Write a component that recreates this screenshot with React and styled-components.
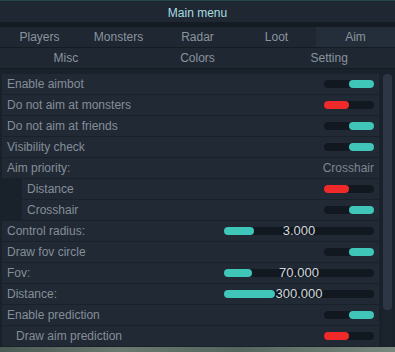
import React from 'react'
import styled, { createGlobalStyle } from 'styled-components'

const Global = createGlobalStyle`
  html, body {
    margin: 0;
    padding: 0;
    background: #182028;
  }
  body {
    font-family: "Liberation Sans", Arial, sans-serif;
    font-size: 12px;
  }
`

const Window = styled.div`
  width: 395px;
  height: 352px;
  background: #19212a;
  display: flex;
  flex-direction: column;
  overflow: hidden;
  position: relative;
`
const TitleBar = styled.div`
  height: 22px;
  background: #1f2732;
  border-top: 1px solid #24474c;
  box-sizing: border-box;
  padding-top: 2px;
  display: flex;
  align-items: center;
  justify-content: center;
  color: #a9dde2;
  font-size: 12px;
`
const Divider = styled.div`
  height: 5px;
  background: #141b22;
`
const TabRow = styled.div`
  display: grid;
  grid-template-columns: repeat(${(p) => p.$cols}, 1fr);
  height: 20px;
  background: #1f2732;
  border-bottom: 1px solid #141b22;
`
const Tab = styled.div`
  display: flex;
  align-items: center;
  justify-content: center;
  color: #8a949f;
  background: ${(p) => (p.$active ? '#242e3b' : 'transparent')};
`
const Body = styled.div`
  flex: 1;
  display: flex;
  padding: 5px 3px 0 2px;
  gap: 4px;
`
const List = styled.div`
  flex: 1;
  display: flex;
  flex-direction: column;
  gap: 1px;
`
const Row = styled.div`
  height: 20px;
  margin-left: ${(p) => (p.$nested ? '20px' : '0')};
  padding-left: ${(p) => (p.$indent ? '14px' : '5px')};
  padding-right: 5px;
  background: #212934;
  display: flex;
  align-items: center;
  justify-content: space-between;
  color: #848e99;
  flex-shrink: 0;
`
const Value = styled.span`
  color: #7c8690;
`
const Toggle = styled.div`
  width: 50px;
  height: 8px;
  border-radius: 4px;
  background: #111820;
  display: flex;
  justify-content: ${(p) => (p.$on ? 'flex-end' : 'flex-start')};
`
const Knob = styled.div`
  width: 25px;
  height: 100%;
  border-radius: 4px;
  background: ${(p) => (p.$on ? '#40c5b9' : '#f0292b')};
`
const Slider = styled.div`
  width: 150px;
  height: 8px;
  border-radius: 4px;
  background: #111820;
  position: relative;
  display: flex;
  align-items: center;
  justify-content: center;
`
const Fill = styled.div`
  position: absolute;
  left: 0;
  top: 0;
  height: 100%;
  border-radius: 4px;
  background: #40c5b9;
`
const SliderText = styled.span`
  position: relative;
  color: #d3d7dc;
  font-size: 13px;
  line-height: 8px;
`
const Scrollbar = styled.div`
  width: 9px;
  height: 274px;
  background: #1b232c;
  border-radius: 4px 4px 0 0;
  display: flex;
  flex-direction: column;
`
const Thumb = styled.div`
  height: 236px;
  background: #2d3644;
  border-radius: 4px;
`
const Ground = styled.div`
  position: absolute;
  left: 0;
  right: 0;
  bottom: 0;
  height: 5px;
  background: linear-gradient(90deg, #4a5a55, #6a7a70 30%, #55665e 60%, #7a8a80);
`

const rows = [
  { label: 'Enable aimbot', toggle: true },
  { label: 'Do not aim at monsters', toggle: false },
  { label: 'Do not aim at friends', toggle: true },
  { label: 'Visibility check', toggle: true },
  { label: 'Aim priority:', value: 'Crosshair' },
  { label: 'Distance', toggle: false, nested: true },
  { label: 'Crosshair', toggle: true, nested: true },
  { label: 'Control radius:', slider: 30, text: '3.000' },
  { label: 'Draw fov circle', toggle: true },
  { label: 'Fov:', slider: 28, text: '70.000' },
  { label: 'Distance:', slider: 51, text: '300.000' },
  { label: 'Enable prediction', toggle: true },
  { label: 'Draw aim prediction', toggle: false, indent: true },
]

const App = () => {
  return (
    <Window>
      <Global />
      <TitleBar>Main menu</TitleBar>
      <Divider />
      <TabRow $cols={5}>
        <Tab>Players</Tab>
        <Tab>Monsters</Tab>
        <Tab>Radar</Tab>
        <Tab>Loot</Tab>
        <Tab $active>Aim</Tab>
      </TabRow>
      <TabRow $cols={3}>
        <Tab>Misc</Tab>
        <Tab>Colors</Tab>
        <Tab>Setting</Tab>
      </TabRow>
      <Body>
        <List>
          {rows.map((r, i) => (
            <Row key={i} $nested={r.nested} $indent={r.indent}>
              <span>{r.label}</span>
              {r.value && <Value>{r.value}</Value>}
              {r.toggle !== undefined && (
                <Toggle $on={r.toggle}>
                  <Knob $on={r.toggle} />
                </Toggle>
              )}
              {r.slider !== undefined && (
                <Slider>
                  <Fill style={{ width: r.slider }} />
                  <SliderText>{r.text}</SliderText>
                </Slider>
              )}
            </Row>
          ))}
        </List>
        <Scrollbar>
          <Thumb />
        </Scrollbar>
      </Body>
      <Ground />
    </Window>
  )
}

export default App
